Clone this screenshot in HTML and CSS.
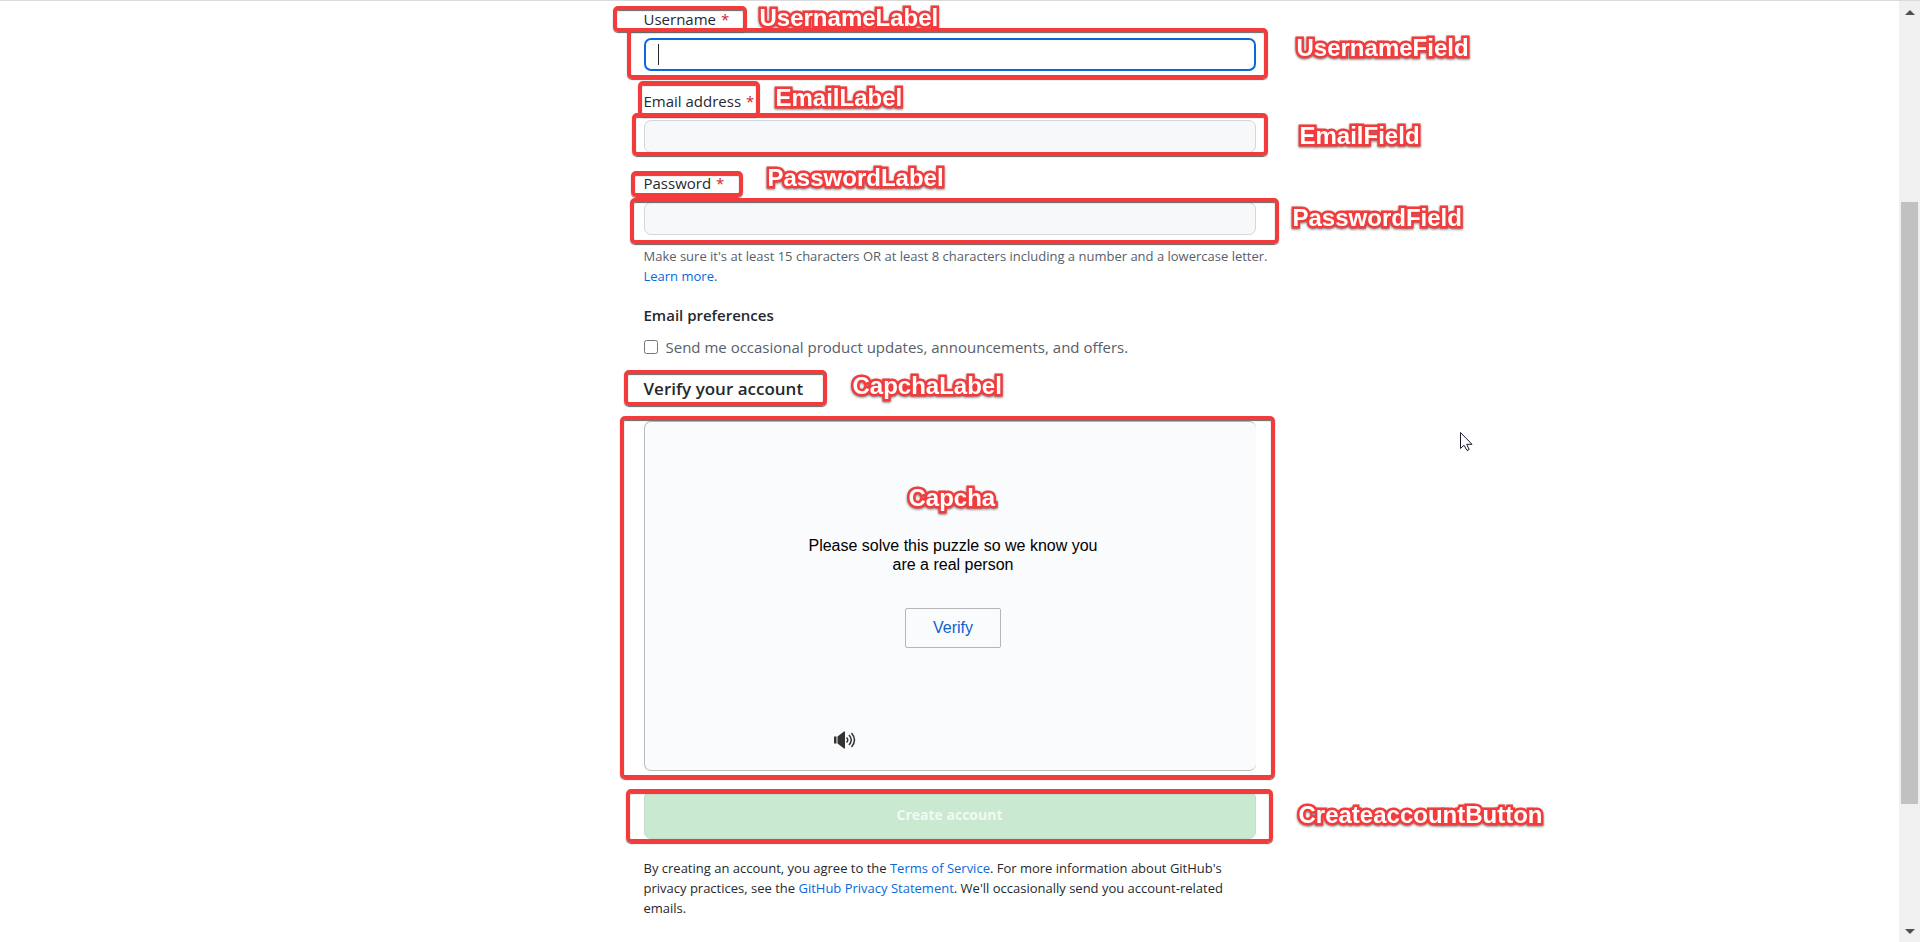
FILE: index.html
```html
<!DOCTYPE html>
<html lang="en">
<head>
<meta charset="utf-8">
<title>Create your account</title>
<link rel="stylesheet" href="styles.css">
</head>
<body>
<div class="window">
  <main class="page">
    <form class="signup">
      <div class="field">
        <div class="marked label-row">
          <label for="username">Username <span class="required">*</span></label>
          <span class="frame frame-username-label"></span>
          <span class="caption caption-username-label">UsernameLabel</span>
        </div>
        <div class="marked">
          <input class="text-input active" id="username" type="text">
          <span class="caret"></span>
          <span class="frame frame-username-field"></span>
          <span class="caption caption-username-field">UsernameField</span>
        </div>
      </div>
      <div class="field">
        <div class="marked label-row">
          <label for="email">Email address <span class="required">*</span></label>
          <span class="frame frame-email-label"></span>
          <span class="caption caption-email-label">EmailLabel</span>
        </div>
        <div class="marked">
          <input class="text-input" id="email" type="email">
          <span class="frame frame-email-field"></span>
          <span class="caption caption-email-field">EmailField</span>
        </div>
      </div>
      <div class="field">
        <div class="marked label-row">
          <label for="password">Password <span class="required">*</span></label>
          <span class="frame frame-password-label"></span>
          <span class="caption caption-password-label">PasswordLabel</span>
        </div>
        <div class="marked">
          <input class="text-input" id="password" type="password">
          <span class="frame frame-password-field"></span>
          <span class="caption caption-password-field">PasswordField</span>
        </div>
      </div>
      <p class="hint">Make sure it's at least 15 characters OR at least 8 characters including a number and a lowercase letter.<br><a href="#learn">Learn more</a>.</p>
      <h3 class="preferences-title">Email preferences</h3>
      <div class="preference">
        <input class="checkbox" id="updates" type="checkbox">
        <label for="updates">Send me occasional product updates, announcements, and offers.</label>
      </div>
      <div class="marked verify-title">
        <h2>Verify your account</h2>
        <span class="frame frame-captcha-label"></span>
        <span class="caption caption-captcha-label">CapchaLabel</span>
      </div>
      <section class="marked captcha">
        <p class="puzzle">Please solve this puzzle so we know you<br>are a real person</p>
        <button class="verify" type="button">Verify</button>
        <div class="captcha-tools">
          <button class="audio" type="button" aria-label="Audio challenge">
            <svg width="22" height="18" viewBox="0 0 22 18">
              <path fill="#333" d="M0 5.500h2.500v7H0zM3.500 5.500 10 .5h1v17h-1l-6.500-5z"/>
              <path fill="none" stroke="#333" stroke-width="1.500" d="M12.500 6.500q2.500 2.500 0 5M15 4q4.500 5 0 10M17.500 2q6 7 0 14"/>
            </svg>
          </button>
        </div>
        <span class="frame frame-captcha"></span>
        <span class="caption caption-captcha">Capcha</span>
      </section>
      <div class="marked submit-row">
        <button class="submit" type="submit" disabled>Create account</button>
        <span class="frame frame-submit"></span>
        <span class="caption caption-submit">CreateaccountButton</span>
      </div>
      <p class="terms">By creating an account, you agree to the <a href="#terms">Terms of Service</a>. For more information about GitHub's<br>privacy practices, see the <a href="#privacy">GitHub Privacy Statement</a>. We'll occasionally send you account-related<br>emails.</p>
    </form>
  </main>
  <div class="scrollbar">
    <svg width="10" height="5" viewBox="0 0 10 5"><path fill="#505050" d="M0 5L5 0l5 5z"/></svg>
    <div class="track"><div class="thumb"></div></div>
    <svg width="10" height="5" viewBox="0 0 10 5"><path fill="#505050" d="M0 0h10L5 5z"/></svg>
  </div>
</div>
<svg class="pointer" width="13" height="20" viewBox="0 0 13 20"><path fill="#fff" stroke="#1b1b2b" d="M.5.5v16l3.500-3.300 3 5.300 2.200-1-2.500-5.200H12z"/></svg>
</body>
</html>
```

FILE: styles.css
```css
* {
  box-sizing: border-box;
}

body {
  margin: 0;
  background: #fff;
  color: #24292f;
  font-family: "Open Sans", "Noto Sans", sans-serif;
}

h2, h3, p {
  margin: 0;
}

a {
  color: #0969da;
  text-decoration: none;
}

.window {
  display: flex;
  min-height: 100vh;
  border-top: 1px solid #dadada;
  overflow: hidden;
}

.page {
  flex: 1;
  padding: 7px 16px 24px;
}

.signup {
  max-width: 612px;
  margin: 0 auto;
}

.marked {
  position: relative;
}

.field + .field {
  margin-top: 19px;
}

.label-row {
  margin-bottom: 8px;
  font-size: 15px;
  font-weight: 500;
  line-height: 22px;
}

.required {
  margin-left: 1px;
  color: #cf222e;
  font-weight: 400;
}

.text-input {
  display: block;
  width: 100%;
  height: 33px;
  padding: 4px 13px;
  border: 1px solid #d0d7de;
  border-radius: 7px;
  background: #f6f8fa;
  font: inherit;
  outline: none;
}

.text-input.active {
  border: 2px solid #0969da;
  background: #fff;
}

.caret {
  position: absolute;
  top: 6px;
  left: 14px;
  width: 1px;
  height: 21px;
  background: #24292f;
}

.hint {
  margin-top: 11px;
  color: #57606a;
  font-size: 13px;
  line-height: 20px;
  white-space: nowrap;
}

.preferences-title {
  margin-top: 17px;
  font-size: 15px;
  font-weight: 600;
  line-height: 24px;
}

.preference {
  display: flex;
  align-items: center;
  gap: 8px;
  margin-top: 8px;
  color: #57606a;
  font-size: 15px;
  line-height: 24px;
}

.checkbox {
  width: 14px;
  height: 14px;
  margin: 0;
}

.verify-title {
  margin-top: 16px;
  line-height: 28px;
}

.verify-title h2 {
  font-size: 17px;
  font-weight: 600;
}

.captcha {
  display: flex;
  flex-direction: column;
  align-items: center;
  min-height: 350px;
  margin-top: 18px;
  padding: 114px 0 21px 6px;
  border: 1px solid #bbb;
  border-right: 0;
  border-radius: 7px;
  background: #fafbfd;
  font-family: "Liberation Sans", Arial, sans-serif;
}

.puzzle {
  color: #000;
  font-size: 16px;
  line-height: 19px;
  text-align: center;
}

.verify {
  width: 96px;
  height: 40px;
  margin-top: 34px;
  border: 1px solid #b5b5b5;
  border-radius: 2px;
  background: #fafbfd;
  color: #0f61d0;
  font: 16px "Liberation Sans", Arial, sans-serif;
}

.captcha-tools {
  width: 238px;
  margin-top: auto;
}

.audio {
  display: block;
  padding: 0;
  border: 0;
  background: none;
}

.audio svg {
  display: block;
}

.submit-row {
  margin-top: 20px;
}

.submit {
  display: block;
  width: 100%;
  height: 48px;
  padding: 0 0 2px;
  border: 1px solid #bfdfc7;
  border-radius: 7px;
  background: #cae9d1;
  color: #f1faf3;
  font: 700 14px "Open Sans", "Noto Sans", sans-serif;
}

.terms {
  margin-top: 19px;
  font-size: 13px;
  line-height: 20px;
  white-space: nowrap;
}

/* Annotation frames and captions drawn over the form */
.frame {
  position: absolute;
  border: 4px solid #f43b3b;
  border-radius: 5px;
  box-shadow: 0 1px 1px #666, inset 0 1px 1px #666;
  pointer-events: none;
}

.caption {
  position: absolute;
  color: #fff;
  font: bold 24px/28px "Liberation Sans", Arial, sans-serif;
  white-space: nowrap;
  -webkit-text-stroke: 5px #f43b3b;
  paint-order: stroke fill;
  filter: drop-shadow(0 1px 1px #777);
}

.frame-username-label { left: -31px; top: -2px; width: 134px; height: 26px; }
.frame-username-field { left: -17px; top: -10px; width: 641px; height: 51px; }
.frame-email-label { left: -6px; top: -9px; width: 122px; height: 36px; }
.frame-email-field { left: -12px; top: -7px; width: 636px; height: 43px; }
.frame-password-label { left: -13px; top: -1px; width: 112px; height: 26px; }
.frame-password-field { left: -14px; top: -4px; width: 649px; height: 46px; }
.frame-captcha-label { left: -20px; top: -5px; width: 203px; height: 36px; }
.frame-captcha { left: -25px; top: -6px; width: 655px; height: 363px; }
.frame-submit { left: -18px; top: -2px; width: 647px; height: 54px; }

.caption-username-label { left: 116px; top: -4px; }
.caption-username-field { left: 653px; top: -4px; }
.caption-email-label { left: 132px; top: -6px; }
.caption-email-field { left: 656px; top: 2px; }
.caption-password-label { left: 124px; top: -8px; }
.caption-password-field { left: 649px; top: 2px; }
.caption-captcha-label { left: 209px; top: -3px; }
.caption-captcha { left: 264px; top: 62px; }
.caption-submit { left: 655px; top: 10px; }

.scrollbar {
  display: flex;
  flex-direction: column;
  align-items: center;
  width: 21px;
  padding: 9px 0 8px;
  background: #f0f0f0;
}

.track {
  display: flex;
  flex: 1;
  flex-direction: column;
  width: 17px;
  margin: 10px 0;
}

.track::before {
  flex: 177;
  content: "";
}

.track::after {
  flex: 115;
  content: "";
}

.thumb {
  flex: 601;
  background: #c1c1c1;
}

.pointer {
  position: absolute;
  top: 432px;
  left: 1460px;
}
```
